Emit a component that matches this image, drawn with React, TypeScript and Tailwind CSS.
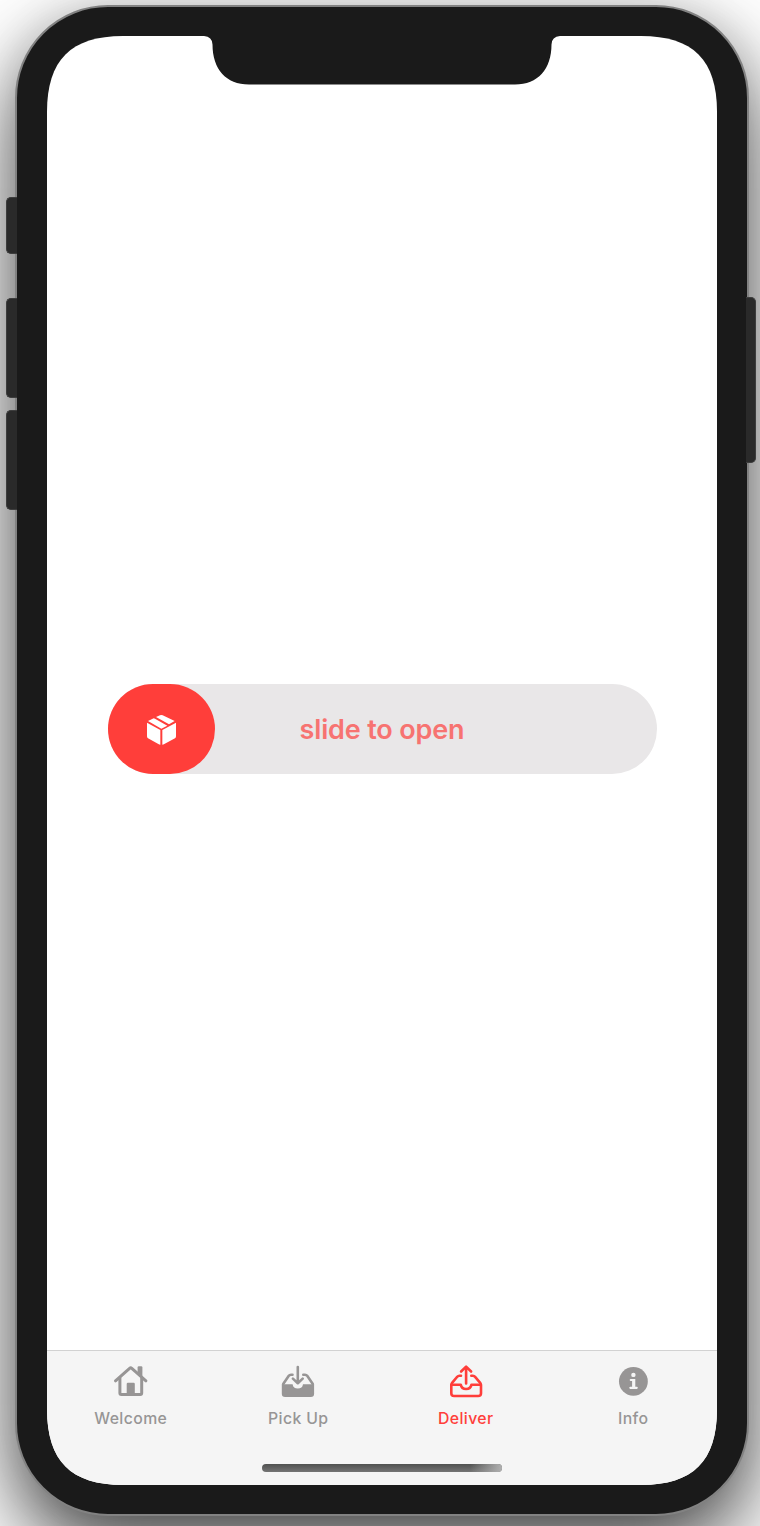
import type { ReactNode } from "react";

function HomeIcon() {
  return (
    <svg width="36" height="36" viewBox="0 0 36 36" fill="none" stroke="currentColor" strokeWidth="3" strokeLinecap="round" strokeLinejoin="round">
      <path d="M2.5 16.8 L16.6 4.3 Q17.7 3.4 18.8 4.3 L32.9 16.8" />
      <path d="M6.9 14 V29 Q6.9 30.4 8.3 30.4 H27.3 Q28.7 30.4 28.7 29 V14" />
      <path d="M24.6 8.5 V3.5 Q24.6 2.3 25.8 2.3 H28.2 Q29.4 2.3 29.4 3.5 V13 Z" fill="currentColor" stroke="none" />
      <path d="M13.7 31 V19.9 Q13.7 18.8 14.8 18.8 H20.7 Q21.8 18.8 21.8 19.9 V31 Z" fill="currentColor" stroke="none" />
    </svg>
  );
}

function PickUpIcon() {
  return (
    <svg width="36" height="36" viewBox="0 0 36 36" fill="none" stroke="currentColor" strokeWidth="2.6" strokeLinecap="round" strokeLinejoin="round">
      <path d="M12.5 10.7 H11 Q9.6 10.7 8.8 11.8 L3.2 20" />
      <path d="M23.3 10.7 H25 Q26.4 10.7 27.2 11.8 L32.8 20" />
      <path d="M17.8 3 V18.4 M12.9 14.6 L17.8 19.2 L22.7 14.6" />
      <path d="M1.8 20.2 H12.6 Q13.2 24.6 17.8 24.6 Q22.4 24.6 23 20.2 H34.1 V29.7 Q34.1 33 30.8 33 H5.1 Q1.8 33 1.8 29.7 Z" fill="currentColor" stroke="none" />
    </svg>
  );
}

function DeliverIcon() {
  return (
    <svg width="36" height="36" viewBox="0 0 36 36" fill="none" stroke="currentColor" strokeWidth="2.6" strokeLinecap="round" strokeLinejoin="round">
      <path d="M13 11.7 H11.4 Q10.1 11.7 9.2 12.8 L3.9 19.2 Q3.3 20 3.3 21 V29.2 Q3.3 32 6.1 32 H30.2 Q33 32 33 29.2 V21 Q33 20 32.4 19.2 L27.1 12.8 Q26.2 11.7 24.9 11.7 H23.3" />
      <path d="M3.6 20.8 H12.8 Q13.4 25 18.1 25 Q22.8 25 23.4 20.8 H32.6" />
      <path d="M18.1 19.4 V2.9 M13.1 7.5 L18.1 2.6 L23.1 7.5" />
    </svg>
  );
}

function InfoIcon() {
  return (
    <svg width="36" height="36" viewBox="0 0 36 36">
      <circle cx="18.4" cy="17.4" r="14.4" fill="currentColor" />
      <circle cx="18.4" cy="10.9" r="2.2" fill="#f5f5f5" />
      <path d="M15.8 14.9 H20.3 V22.7 H21.8 Q22.8 22.7 22.8 23.8 Q22.8 24.9 21.8 24.9 H15.3 Q14.3 24.9 14.3 23.8 Q14.3 22.7 15.3 22.7 H17.1 V17.1 H15.8 Q14.7 17.1 14.7 16 Q14.7 14.9 15.8 14.9 Z" fill="#f5f5f5" />
    </svg>
  );
}

function BoxIcon() {
  return (
    <svg className="mt-px" width="29" height="30" viewBox="141 116 87 90" fill="#fff">
      <path d="M141 139 L181 161 V205 Q178 205 175 203 L144 186 Q141 184 141 180 Z" />
      <path d="M228 139 L187 161 V205 Q190 205 193 203 L225 186 Q228 184 228 180 Z" />
      <path d="M144 134 L158 127 Q161 125 165 127 L202 148 L184 157 Z" />
      <path d="M168 122 L180 117 Q184 115 188 117 L224 134 L207 144 Z" />
    </svg>
  );
}

function Tab({ label, icon, active = false }: { label: string; icon: ReactNode; active?: boolean }) {
  return (
    <div className={`flex flex-1 flex-col items-center pt-[13px] ${active ? "text-[#ff3e3a]" : "text-[#979595]"}`}>
      {icon}
      <span className="mt-2 text-[15.8px] leading-[22px] font-medium tracking-[0.4px]">{label}</span>
    </div>
  );
}

function SideButton({ className }: { className: string }) {
  return <div className={`absolute border border-[#3d3d3d] bg-[#2a2a2a] ${className}`} />;
}

export default function App() {
  return (
    <div className="relative flex h-[1526px] w-[760px] justify-center overflow-hidden bg-white pt-[5px] pl-1 font-['Inter','Liberation_Sans',sans-serif]">
      <div className="relative h-[1511px] w-[734px] rounded-[93px] border-2 border-[#828282] bg-[#1a1a1a] px-[30px] pt-[29px] shadow-[0_36px_84px_rgba(0,0,0,0.72),0_0_40px_rgba(0,0,0,0.08)]">
        <div className="flex h-[1449px] w-[670px] flex-col bg-white [clip-path:path('M0_76C0_24_24_0_76_0H594C646_0_670_24_670_76V1373C670_1425_646_1449_594_1449H76C24_1449_0_1425_0_1373Z')]">
          <svg className="mx-auto shrink-0" width="356" height="49" viewBox="0 0 356 49">
            <path d="M0 0 H356 Q347.8 0.5 347.5 8.5 C347.5 33 334 48.5 311 48.5 H45 C22 48.5 8.5 33 8.5 8.5 Q8.2 0.5 0 0 Z" fill="#1a1a1a" />
          </svg>
          <main className="flex flex-1 flex-col items-center pt-[599px]">
            <div className="relative flex h-[90px] w-[549px] items-center rounded-full bg-[#e9e7e8]">
              <button className="flex h-[90px] w-[107px] items-center justify-center rounded-full bg-[#ff3e3a]" aria-label="Open">
                <BoxIcon />
              </button>
              <span className="pointer-events-none absolute inset-x-0 pt-[2px] text-center text-[27px] leading-[34px] font-semibold tracking-[-0.15px] text-[#f77371]">slide to open</span>
            </div>
          </main>
          <nav className="flex h-[135px] shrink-0 flex-col border-t border-[#d2d2d2] bg-[#f5f5f5]">
            <div className="flex">
              <Tab label="Welcome" icon={<HomeIcon />} />
              <Tab label="Pick Up" icon={<PickUpIcon />} />
              <Tab label="Deliver" icon={<DeliverIcon />} active />
              <Tab label="Info" icon={<InfoIcon />} />
            </div>
            <div className="mx-auto mt-auto mb-[13px] h-2 w-[240px] overflow-hidden rounded-full bg-linear-to-b from-[#505150] to-[#747474]">
              <div className="ml-auto h-full w-8 bg-linear-to-r from-transparent to-[#b0b0b0]" />
            </div>
          </nav>
        </div>
      </div>
      <SideButton className="top-[197px] left-[6px] h-[57px] w-[11px] rounded-l-[5px] border-r-0" />
      <SideButton className="top-[298px] left-[6px] h-[100px] w-[11px] rounded-l-[5px] border-r-0" />
      <SideButton className="top-[410px] left-[6px] h-[100px] w-[11px] rounded-l-[5px] border-r-0" />
      <SideButton className="top-[297px] left-[746px] h-[166px] w-[10px] rounded-r-[5px] border-l-0" />
    </div>
  );
}
